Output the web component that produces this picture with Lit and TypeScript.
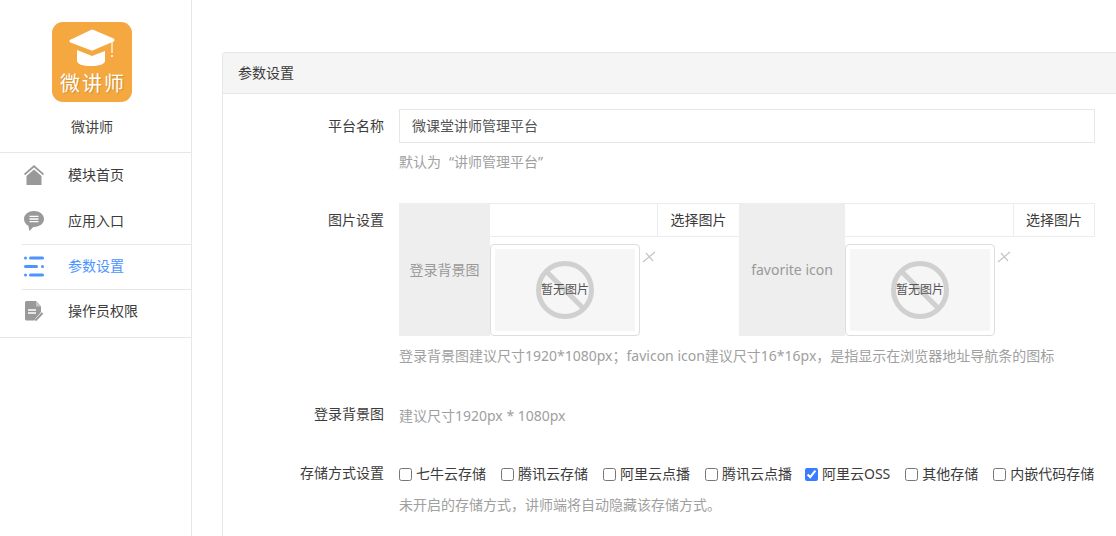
import { LitElement, html, css, svg } from "lit";
import { customElement } from "lit/decorators.js";

const homeIcon = html`<svg width="20" height="20" viewBox="0 0 20 20"><path d="M10 0 0 8.800l1 1.400L10 2.500l9 7.700 1-1.400z" fill="#999"/><path d="M10 4.500 2.500 11v9h15v-9z" fill="#999"/></svg>`;
const chatIcon = html`<svg width="20" height="20" viewBox="0 0 20 20"><path d="M10 0C4.500 0 0 3.500 0 8c0 3 1.900 5.500 4.500 6.900l.7 5 4.200-4H10c5.500 0 10-3.300 10-7.900S15.500 0 10 0z" fill="#999"/><path d="M5.500 5.400h9M5.500 8h9M5.500 10.600h9" stroke="#fff" stroke-width="1.300" fill="none"/></svg>`;
const listIcon = html`<svg width="20" height="21" viewBox="0 0 20 21"><g fill="#4d94ff"><circle cx="1.500" cy="2" r="1.500"/><rect x="5" y=".5" width="15" height="3" rx="1.500"/><rect x="0" y="9" width="14" height="3" rx="1.500"/><circle cx="18.500" cy="10.500" r="1.500"/><circle cx="1.500" cy="19" r="1.500"/><rect x="5" y="17.500" width="15" height="3" rx="1.500"/></g></svg>`;
const docIcon = html`<svg width="20" height="20" viewBox="0 0 20 20"><path d="M1.500 0H11l5 5.500V11l-6 7-.4 1.500H1.500A1.500 1.500 0 0 1 0 18V1.500A1.500 1.500 0 0 1 1.500 0z" fill="#999" transform="translate(1 0)"/><path d="M12 0v5.500h5z" fill="#c4c4c4"/><path d="M4 9h8M4 12h8" stroke="#fff" stroke-width="1.500"/><path d="M11.500 19.500l7-7.500" stroke="#999" stroke-width="2"/></svg>`;

const nav = [
  { label: "模块首页", icon: homeIcon, cls: "i0" },
  { label: "应用入口", icon: chatIcon, cls: "i1" },
  { label: "参数设置", icon: listIcon, cls: "i2" },
  { label: "操作员权限", icon: docIcon, cls: "i3" },
];
const storage = [
  ["七牛云存储", false], ["腾讯云存储", false], ["阿里云点播", false], ["腾讯云点播", false],
  ["阿里云OSS", true], ["其他存储", false], ["内嵌代码存储", false],
] as const;

const placeholder = svg`<circle cx="29" cy="29" r="26.500" fill="none" stroke="#d0d0d0" stroke-width="5"/><path d="M10 10l38 38" stroke="#d0d0d0" stroke-width="5"/>`;

@customElement("app-root")
export class AppRoot extends LitElement {
  static styles = css`
    :host { display: flex; width: 1116px; height: 536px; overflow: hidden; background: #fff; color: #3c3c3c; font: 14px/20px "Noto Sans", "Noto Sans CJK SC", sans-serif; }
    .side { width: 191px; flex: none; border-right: 1px solid #e7e7e7; }
    .brand { height: 130px; padding: 22px 7px 0 0; display: flex; flex-direction: column; align-items: center; border-bottom: 1px solid #e7e7e7; }
    .logo { width: 80px; height: 80px; border-radius: 11px; background: #f4a83f; display: flex; flex-direction: column; align-items: center; color: #fff; }
    .logo svg { margin-top: 6px; display: block; }
    .logo span { font-size: 20px; line-height: 26px; margin: 5px 0 0 2px; letter-spacing: 2px; text-shadow: 1px 1px 1px rgba(0, 0, 0, .15); }
    .brand-name { margin-top: 15px; line-height: 20px; color: #444; }
    .nav { border-bottom: 1px solid #e7e7e7; }
    .item { display: flex; align-items: center; gap: 24px; padding-left: 24px; box-sizing: border-box; }
    .item .ic { width: 20px; height: 20px; display: flex; }
    .i0 { height: 45px; padding-bottom: 2px; }
    .i1 { height: 46px; }
    .i2, .i3 { border-top: 1px solid #e7e7e7; margin: 0 -1px 0 22px; padding-left: 2px; }
    .i2 { height: 45px; padding-bottom: 2px; color: #4d94ff; }
    .i3 { height: 48px; padding-bottom: 5px; }
    .main { flex: 1; padding: 52px 0 0 30px; min-width: 0; }
    .panel { border: 1px solid #e7e7e7; border-right: none; border-bottom: none; border-radius: 3px 0 0 0; height: 484px; box-sizing: border-box; width: 894px; }
    .head { height: 40px; background: #f5f5f5; border-bottom: 1px solid #e7e7e7; padding-left: 15px; display: flex; align-items: center; }
    .form { padding-top: 15px; display: flex; flex-direction: column; }
    .row { display: grid; grid-template-columns: 161px 696px; column-gap: 15px; }
    .lbl { text-align: right; line-height: 34px; }
    .ctl { min-width: 0; }
    .input { height: 34px; box-sizing: border-box; border: 1px solid #e7e7e7; padding-left: 12px; display: flex; align-items: center; color: #555; }
    .help { color: #a0a0a0; line-height: 20px; margin-top: 9px; }
    .oq { margin-left: 8px; }
    .r2 { margin-top: 31px; }
    .r2 .help { margin-top: 10px; }
    .r3 { margin-top: 31px; }
    .r4 { margin-top: 23px; }
    .pics { display: flex; height: 133px; }
    .addon { background: #eee; color: #999; display: flex; align-items: center; justify-content: center; flex: none; }
    .a1 { width: 91px; }
    .a2 { width: 106px; }
    .pick { width: 249px; flex: none; }
    .pick.wide { width: 250px; }
    .bar { display: flex; height: 34px; box-sizing: border-box; border-top: 1px solid #ececec; border-bottom: 1px solid #ececec; }
    .bar .fill { flex: 1; }
    .bar .btn { width: 81px; flex: none; border-left: 1px solid #ececec; display: flex; align-items: center; justify-content: center; }
    .pick.wide .btn { width: 80px; border-right: 1px solid #ececec; }
    .thumbrow { display: flex; margin-top: 7px; align-items: flex-start; }
    .thumb { width: 140px; height: 82px; padding: 4px; border: 1px solid #ddd; border-radius: 4px; }
    .inner { width: 140px; height: 82px; background: #f6f6f6; position: relative; display: flex; align-items: center; justify-content: center; }
    .inner svg { position: absolute; left: 41px; top: 12px; }
    .inner span { position: relative; font-size: 12px; color: #555; line-height: 16px; }
    .x { margin: 6px 0 0 2px; display: block; }
    .hint { color: #a0a0a0; line-height: 34px; padding-top: 2px; }
    .checks { display: flex; gap: 15px; line-height: 20px; padding-top: 8px; height: 34px; box-sizing: border-box; }
    .check { display: flex; align-items: center; gap: 4px; height: 20px; white-space: nowrap; }
    .check:nth-child(5) { margin-left: -2px; }
    .check input { margin: 0; width: 13px; height: 13px; accent-color: #3b7cff; flex: none; }
    .r4 .help { margin-top: 5px; }
  `;

  private pick(label: string, cls: string, pickCls: string) {
    return html`
      <div class="addon ${cls}">${label}</div>
      <div class="pick ${pickCls}">
        <div class="bar"><div class="fill"></div><div class="btn">选择图片</div></div>
        <div class="thumbrow">
          <div class="thumb">
            <div class="inner">
              <svg width="58" height="58" viewBox="0 0 58 58">${placeholder}</svg>
              <span>暂无图片</span>
            </div>
          </div>
          <svg class="x" width="14" height="14" viewBox="0 0 14 14"><path d="M1 12 13 2M4 3l7 8" stroke="#c4c4c4" stroke-width="1.200" fill="none"/></svg>
        </div>
      </div>`;
  }

  render() {
    return html`
      <aside class="side">
        <div class="brand">
          <div class="logo">
            <svg width="48" height="38" viewBox="0 0 48 38">
              <path d="M24 3 3 13 24 21 45 12z" fill="#fff" stroke="#fff" stroke-linejoin="round" stroke-width="3"/>
              <path d="M9 22l15 6 13-5v10c0 3-6 5-14 5s-14-2-14-5z" fill="#fff"/>
              <path d="M44 14v11" stroke="#fff" stroke-width="1.200"/><circle cx="44" cy="28" r="1" fill="#fff"/>
            </svg>
            <span>微讲师</span>
          </div>
          <div class="brand-name">微讲师</div>
        </div>
        <nav class="nav">
          ${nav.map((n) => html`
            <div class="item ${n.cls}"><span class="ic">${n.icon}</span><span>${n.label}</span></div>`)}
        </nav>
      </aside>
      <main class="main">
        <section class="panel">
          <div class="head">参数设置</div>
          <div class="form">
            <div class="row">
              <div class="lbl">平台名称</div>
              <div class="ctl">
                <div class="input">微课堂讲师管理平台</div>
                <div class="help">默认为<span class="oq">“</span>讲师管理平台”</div>
              </div>
            </div>
            <div class="row r2">
              <div class="lbl">图片设置</div>
              <div class="ctl">
                <div class="pics">${this.pick("登录背景图", "a1", "")}${this.pick("favorite icon", "a2", "wide")}</div>
                <div class="help">登录背景图建议尺寸1920*1080px；favicon icon建议尺寸16*16px，是指显示在浏览器地址导航条的图标</div>
              </div>
            </div>
            <div class="row r3">
              <div class="lbl">登录背景图</div>
              <div class="ctl hint">建议尺寸1920px * 1080px</div>
            </div>
            <div class="row r4">
              <div class="lbl">存储方式设置</div>
              <div class="ctl">
                <div class="checks">
                  ${storage.map(([t, c]) => html`<label class="check"><input type="checkbox" .checked=${c} />${t}</label>`)}
                </div>
                <div class="help">未开启的存储方式，讲师端将自动隐藏该存储方式。</div>
              </div>
            </div>
          </div>
        </section>
      </main>
    `;
  }
}
